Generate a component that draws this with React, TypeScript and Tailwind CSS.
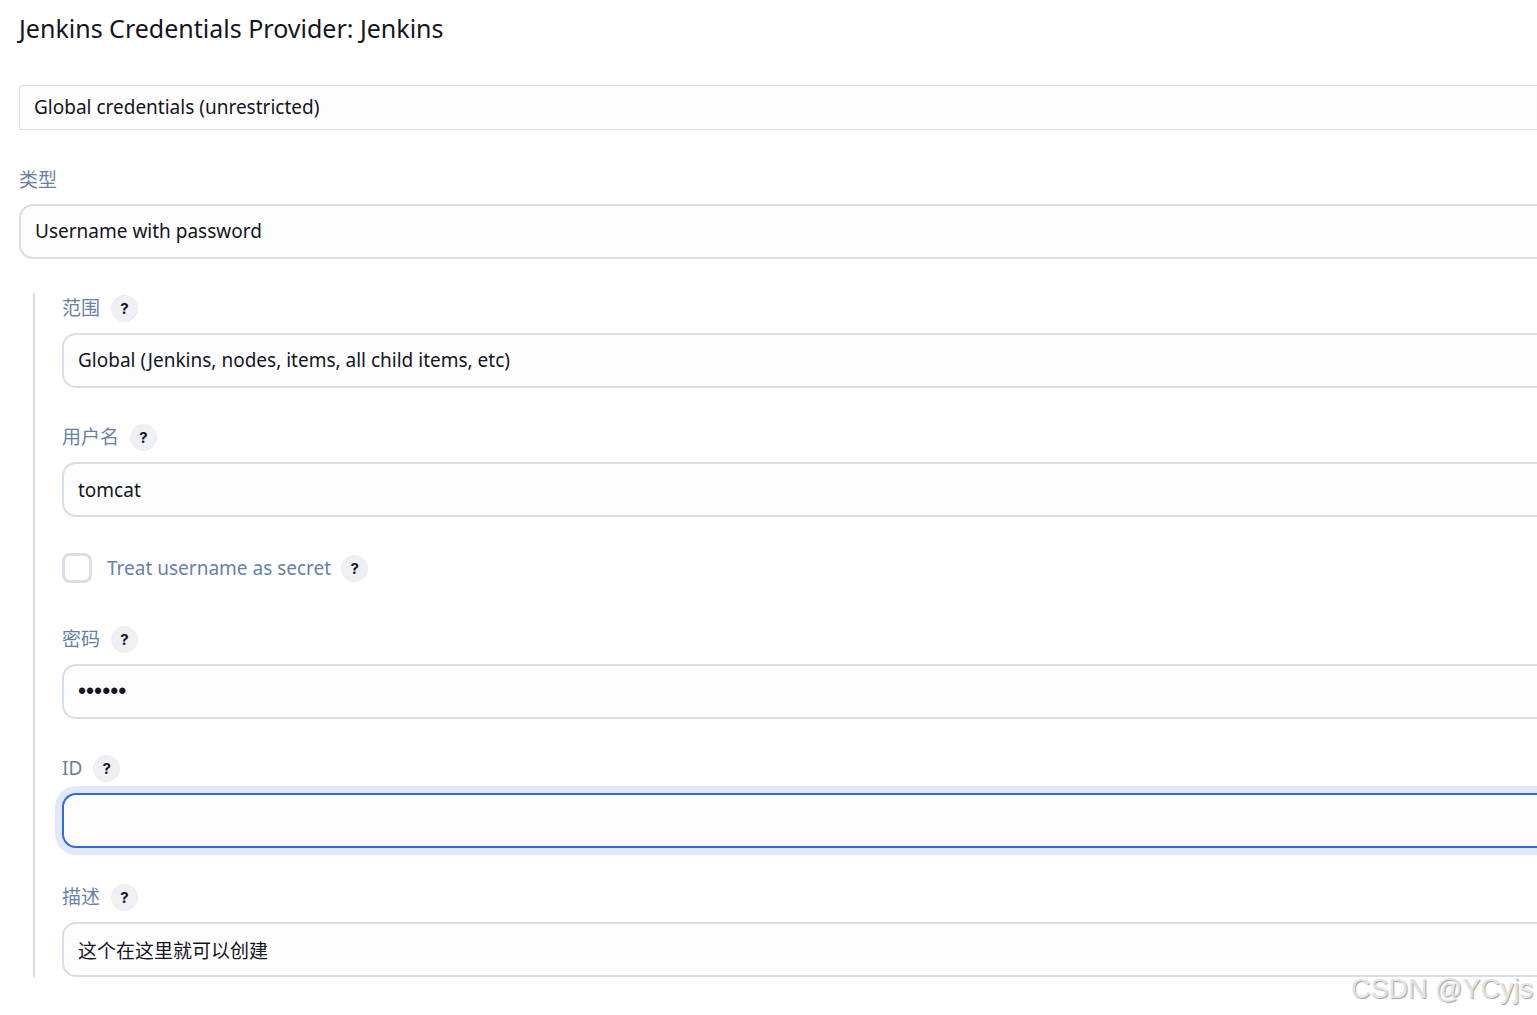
import { useId, useState } from "react";
import type { ReactNode } from "react";

const control =
  "block h-[55px] w-full appearance-none rounded-l-[14px] border-2 border-r-0 border-[#d8dee8] bg-[#fdfdfd] px-3.5 text-[19px] text-[#14141f] outline-none focus:border-[#2f6bdc] focus:shadow-[0_0_0_7px_#e0e9fb]";

const passwordControl =
  "block h-[55px] w-full appearance-none rounded-l-[14px] border-2 border-r-0 border-[#d8dee8] bg-[#fdfdfd] px-3.5 font-['Liberation_Sans',sans-serif] text-[23px] text-[#14141f] outline-none focus:border-[#2f6bdc] focus:shadow-[0_0_0_7px_#e0e9fb]";

function Help({ topic }: { topic: string }) {
  return (
    <button
      type="button"
      aria-label={`Help for ${topic}`}
      className="flex size-[27px] shrink-0 items-center justify-center rounded-full border border-[#eaebf0] bg-[#eff0f5] font-['Inter',sans-serif] text-[15px] leading-none font-bold text-[#14141f]"
    >
      ?
    </button>
  );
}

function Field({
  label,
  children,
}: {
  label: string;
  children: (id: string) => ReactNode;
}) {
  const id = useId();
  return (
    <div className="flex flex-col gap-[11px]">
      <div className="flex h-[27px] items-center gap-[11px]">
        <label htmlFor={id} className="text-[19px] text-[#6781a6]">
          {label}
        </label>
        <Help topic={label} />
      </div>
      {children(id)}
    </div>
  );
}

export default function App() {
  const [username, setUsername] = useState("tomcat");
  const [password, setPassword] = useState("tomcat");
  const [identifier, setIdentifier] = useState("");
  const [description, setDescription] = useState("这个在这里就可以创建");

  return (
    <main className="relative min-h-screen overflow-x-hidden bg-white pt-2.5 pb-[38px] pl-[19px] font-['Noto_Sans','Noto_Sans_CJK_SC',sans-serif] text-[#14141f]">
      <form onSubmit={(e) => e.preventDefault()}>
        <h1 className="text-[25px] leading-9">Jenkins Credentials Provider: Jenkins</h1>

        <select
          aria-label="Domain"
          className="mt-[39px] block h-[45px] w-full appearance-none rounded-l-[3px] border border-r-0 border-[#d8dee8] bg-[#fdfdfd] px-3.5 text-[19px] shadow-[inset_0_1px_1px_#0000000d]"
        >
          <option>Global credentials (unrestricted)</option>
        </select>

        <label htmlFor="kind" className="mt-9 block text-[19px] leading-7 text-[#6781a6]">
          类型
        </label>
        <select id="kind" className={`${control} mt-2.5`}>
          <option>Username with password</option>
        </select>

        <div className="mt-[34px] ml-3.5 flex flex-col gap-9 border-l-2 border-[#d8dee8] pt-0.5 pl-[27px]">
          <Field label="范围">
            {(id) => (
              <select id={id} className={control}>
                <option>Global (Jenkins, nodes, items, all child items, etc)</option>
                <option>System (Jenkins and nodes only)</option>
              </select>
            )}
          </Field>

          <Field label="用户名">
            {(id) => (
              <input
                id={id}
                type="text"
                value={username}
                onChange={(e) => setUsername(e.target.value)}
                className={control}
              />
            )}
          </Field>

          <div className="mb-[7px] flex items-center">
            <input
              id="secret"
              type="checkbox"
              className="size-[30px] shrink-0 appearance-none rounded-lg border-[3px] border-[#d8dfe7] bg-white checked:bg-[#2f6bdc]"
            />
            <label htmlFor="secret" className="pr-2.5 pl-[15px] text-[19px] leading-7 text-[#6781a6]">
              Treat username as secret
            </label>
            <Help topic="Treat username as secret" />
          </div>

          <Field label="密码">
            {(id) => (
              <input
                id={id}
                type="password"
                value={password}
                onChange={(e) => setPassword(e.target.value)}
                className={passwordControl}
              />
            )}
          </Field>

          <Field label="ID">
            {(id) => (
              <input
                id={id}
                type="text"
                value={identifier}
                onChange={(e) => setIdentifier(e.target.value)}
                className="block h-[55px] w-full rounded-l-[14px] border-2 border-r-0 border-[#2f6bdc] bg-[#fdfdfd] px-3.5 text-[19px] shadow-[0_0_0_7px_#e0e9fb] outline-none"
              />
            )}
          </Field>

          <Field label="描述">
            {(id) => (
              <input
                id={id}
                type="text"
                value={description}
                onChange={(e) => setDescription(e.target.value)}
                className={control}
              />
            )}
          </Field>
        </div>
      </form>

      <p className="pointer-events-none absolute right-1 bottom-2.5 font-['Liberation_Sans',sans-serif] text-[27px] leading-8 text-[#e4e4e4] [text-shadow:1px_1px_1px_#a0a0a0]">
        CSDN @YCyjs
      </p>
    </main>
  );
}
